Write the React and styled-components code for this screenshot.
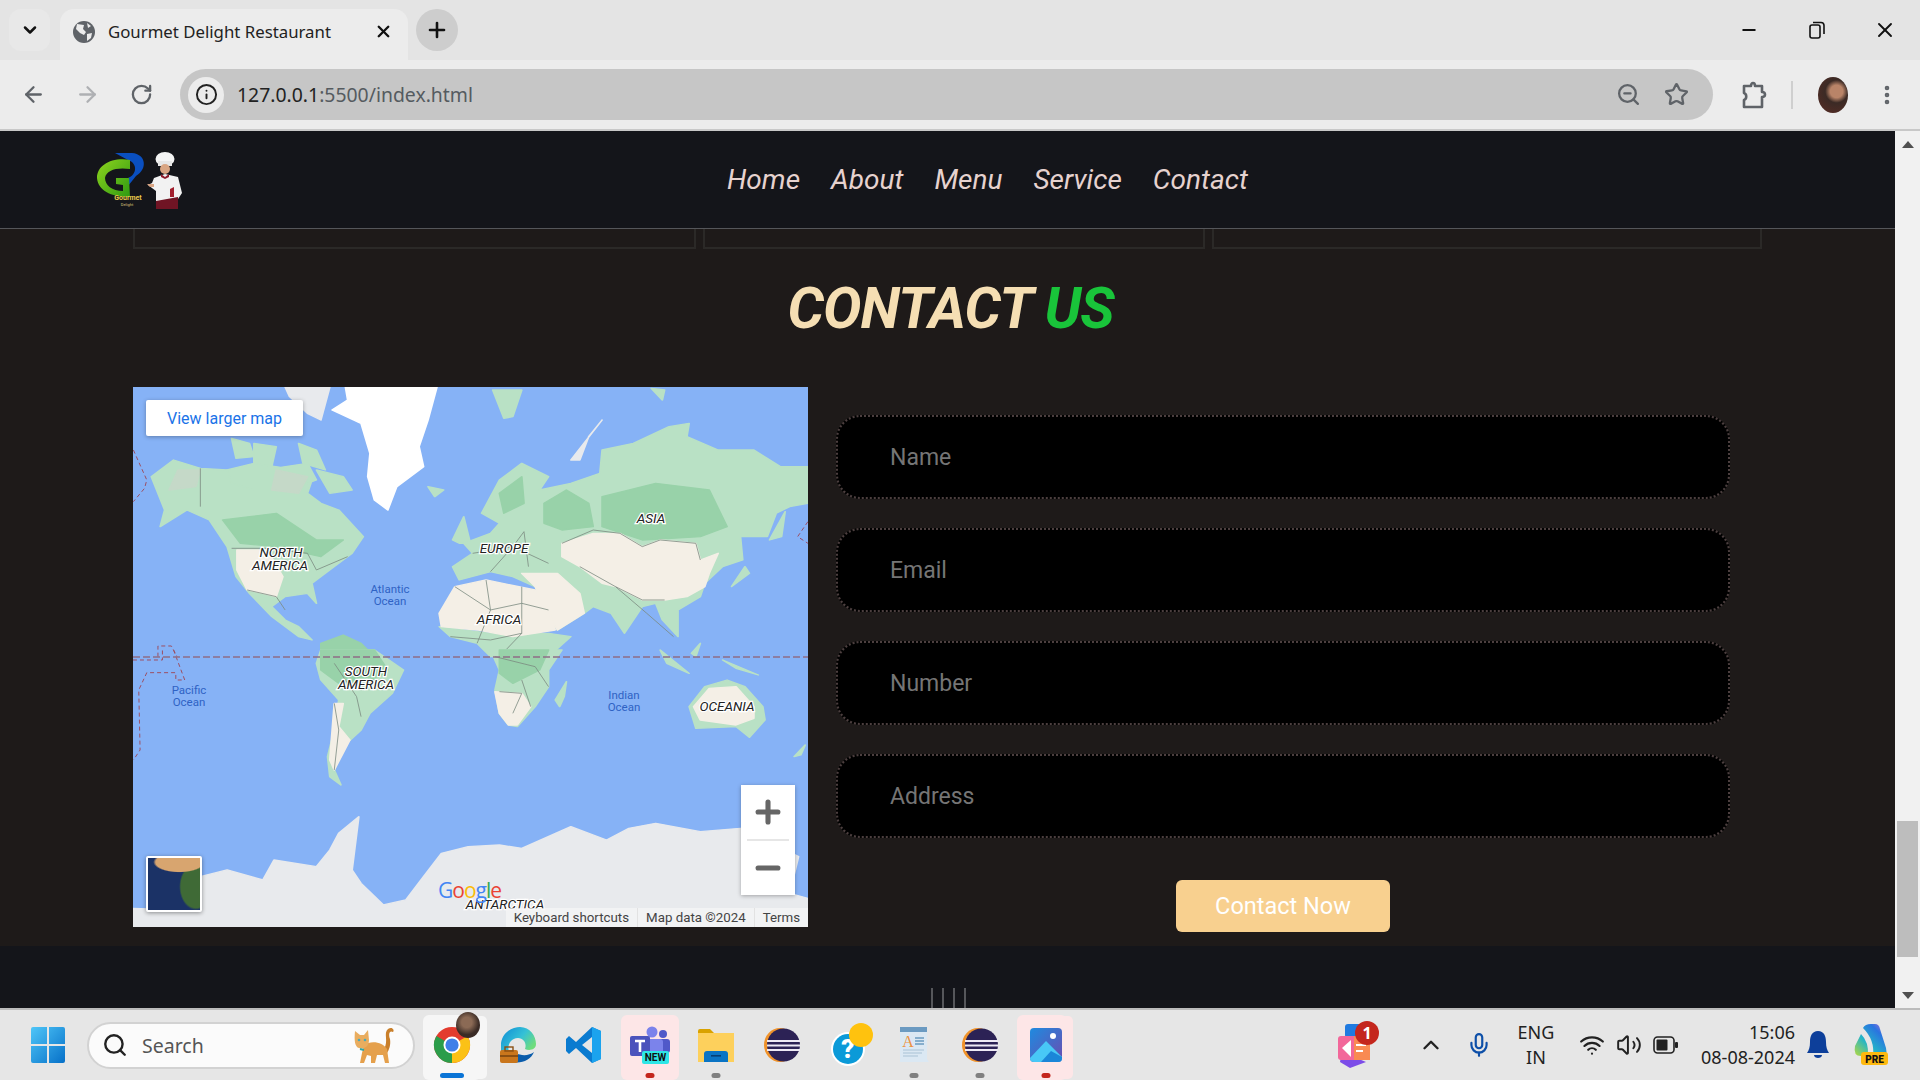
import React from 'react';
import styled, { createGlobalStyle } from 'styled-components';
import {
  ArrowLeft,
  ArrowRight,
  RotateCw,
  Info,
  ZoomOut,
  Star,
  MoreVertical,
  X,
  Plus,
  Minus,
  ChevronDown,
  ChevronUp,
  Search,
  Mic,
  Wifi,
  Volume2,
} from 'lucide-react';

const GlobalStyle = createGlobalStyle`
  html, body {
    margin: 0;
    padding: 0;
    overflow: hidden;
  }
  * {
    box-sizing: border-box;
  }
`;

const Screen = styled.div`
  width: 1920px;
  height: 1080px;
  display: flex;
  flex-direction: column;
  overflow: hidden;
  font-family: Roboto, sans-serif;
`;

/* browser chrome */
const TabStrip = styled.div`
  height: 60px;
  flex: none;
  display: flex;
  align-items: flex-end;
  background: #e4e4e4;
  padding-left: 9px;
`;

const TabListButton = styled.div`
  width: 41px;
  height: 42px;
  margin: 0 10px 9px 0;
  border-radius: 12px;
  background: #e8e8e8;
  display: flex;
  align-items: center;
  justify-content: center;
`;

const Tab = styled.div`
  width: 348px;
  height: 51px;
  background: #ececec;
  border-radius: 14px 14px 0 0;
  display: flex;
  align-items: center;
  padding: 0 15px 6px 13px;
  font-family: "Noto Sans", sans-serif;
  font-size: 16.8px;
  color: #222;
`;

const TabFavicon = styled.div`
  display: flex;
  margin-right: 13px;
`;

const TabTitle = styled.span`
  flex: 1;
  white-space: nowrap;
`;

const NewTab = styled.div`
  width: 42px;
  height: 42px;
  border-radius: 50%;
  background: #cdcdcd;
  margin: 0 0 9px 8px;
  display: flex;
  align-items: center;
  justify-content: center;
`;

const WindowControls = styled.div`
  margin-left: auto;
  height: 60px;
  display: flex;
  align-items: center;
  padding-right: 1px;
`;

const WindowButton = styled.div`
  width: 68px;
  display: flex;
  justify-content: center;
  align-items: center;
`;

const Toolbar = styled.div`
  height: 71px;
  flex: none;
  display: flex;
  align-items: center;
  background: #ececec;
  border-bottom: 2px solid #c8c8c8;
  padding: 0 0 0 6px;
`;

const NavIcon = styled.div`
  width: 54px;
  display: flex;
  justify-content: center;
  color: ${(p) => p.$color || '#5f6368'};
`;

const UrlBar = styled.div`
  width: 1533px;
  height: 51px;
  margin-left: 12px;
  border-radius: 26px;
  background: #c6c6c6;
  display: flex;
  align-items: center;
  padding: 0 24px 0 8px;
  font-family: "Noto Sans", sans-serif;
  font-size: 19.4px;
  color: #555b60;
`;

const InfoChip = styled.div`
  width: 36px;
  height: 36px;
  border-radius: 50%;
  background: #ececec;
  color: #222;
  display: flex;
  align-items: center;
  justify-content: center;
  margin-right: 13px;
`;

const UrlHost = styled.span`
  color: #222;
`;

const UrlActions = styled.div`
  margin-left: auto;
  display: flex;
  gap: 23px;
  color: #5f6368;
`;

const ToolbarRight = styled.div`
  display: flex;
  align-items: center;
  margin-left: 28px;
  color: #5f6368;
`;

const ToolDivider = styled.div`
  width: 2px;
  height: 28px;
  background: #cfcfcf;
  margin: 0 25px 0 24px;
`;

const Avatar = styled.div`
  width: 30px;
  height: 36px;
  border-radius: 50%;
  background: radial-gradient(circle at 62% 40%, #b98468 0 22%, #3b2a25 40%, #5a2c24 100%);
`;

const MoreSlot = styled.div`
  display: flex;
  margin-left: 27px;
`;

/* page */
const Viewport = styled.div`
  flex: 1;
  min-height: 0;
  display: flex;
`;

const Page = styled.div`
  flex: 1;
  min-width: 0;
  display: flex;
  flex-direction: column;
`;

const Scrollbar = styled.div`
  width: 25px;
  flex: none;
  background: #f1f1f1;
  display: flex;
  flex-direction: column;
  align-items: center;
  justify-content: space-between;
  padding: 10px 0 9px;
`;

const ScrollArrow = styled.div`
  width: 0;
  height: 0;
  border-left: 6px solid transparent;
  border-right: 6px solid transparent;
  ${(p) => (p.$down ? 'border-top: 7px solid #505050;' : 'border-bottom: 7px solid #505050;')}
`;

const ScrollTrack = styled.div`
  flex: 1;
  width: 100%;
  display: flex;
  flex-direction: column;
  justify-content: flex-end;
  padding: 0 2px 35px;
`;

const ScrollThumb = styled.div`
  height: 136px;
  background: #bdbdbd;
`;

const Navbar = styled.nav`
  height: 98px;
  flex: none;
  display: flex;
  align-items: center;
  background: #14151a;
  border-bottom: 1px solid #55565a;
  padding-left: 90px;
`;

const NavLinks = styled.div`
  display: flex;
  gap: 31px;
  margin-left: 527px;
`;

const NavLink = styled.a`
  font-size: 28px;
  font-style: italic;
  font-weight: 400;
  color: #e6d2cf;
  text-decoration: none;
`;

const ContactSection = styled.section`
  height: 717px;
  flex: none;
  background: #1e1a19;
  padding: 0 133px;
`;

const CardRemnants = styled.div`
  display: flex;
  gap: 7px;
  width: 1630px;
`;

const CardRemnant = styled.div`
  width: ${(p) => p.$w}px;
  height: 20px;
  border: 2px solid #2b2927;
  border-top: none;
`;

const Heading = styled.h2`
  margin: 27px 0 0;
  height: 111px;
  padding-left: 6px;
  text-align: center;
  font-size: 57.5px;
  line-height: 66px;
  font-weight: 700;
  font-style: italic;
  letter-spacing: -1px;
  color: #f5deb3;
`;

const HeadingAccent = styled.span`
  color: #19c43a;
`;

const ContactRow = styled.div`
  display: flex;
  gap: 28px;
`;

const MapFrame = styled.div`
  position: relative;
  width: 675px;
  height: 540px;
  flex: none;
  background: #86b2f6;
  overflow: hidden;
`;

const MapCanvas = styled.svg`
  display: block;
`;

const LargerMap = styled.div`
  position: absolute;
  left: 13px;
  top: 13px;
  width: 157px;
  height: 36px;
  background: #fff;
  border-radius: 2px;
  box-shadow: 0 1px 4px rgba(0, 0, 0, 0.3);
  display: flex;
  align-items: center;
  justify-content: center;
  color: #1a73e8;
  font-size: 16px;
`;

const ZoomBox = styled.div`
  position: absolute;
  right: 13px;
  bottom: 32px;
  width: 54px;
  height: 110px;
  background: #fff;
  box-shadow: 0 1px 4px rgba(0, 0, 0, 0.3);
  display: flex;
  flex-direction: column;
  align-items: center;
  justify-content: space-between;
  padding: 10px 0;
  color: #666;
`;

const ZoomRule = styled.div`
  width: 42px;
  height: 2px;
  background: #e6e6e6;
`;

const SatelliteThumb = styled.div`
  position: absolute;
  left: 13px;
  bottom: 15px;
  width: 56px;
  height: 56px;
  border: 2px solid #fff;
  border-radius: 2px;
  box-shadow: 0 1px 4px rgba(0, 0, 0, 0.4);
  background:
    radial-gradient(ellipse 50% 20% at 60% 8%, #d8a56f 90%, transparent),
    radial-gradient(ellipse 32% 45% at 92% 55%, #3f6a36 90%, transparent),
    #1b3266;
`;

const GoogleMark = styled.div`
  position: absolute;
  left: 305px;
  top: 491px;
  font-family: "Open Sans", sans-serif;
  font-size: 21px;
  letter-spacing: -1px;
  line-height: 24px;
`;

const GoogleLetter = styled.span`
  color: ${(p) => p.$c};
`;

const Attribution = styled.div`
  position: absolute;
  right: 0;
  bottom: 0;
  height: 19px;
  display: flex;
  background: rgba(245, 245, 245, 0.75);
  font-size: 13.3px;
  line-height: 19px;
  color: #444;
`;

const AttributionItem = styled.span`
  padding: 0 8px;
  white-space: nowrap;
  & + & {
    border-left: 1px solid #e2e2e2;
  }
`;

const ContactForm = styled.form`
  width: 894px;
  padding-top: 28px;
  display: flex;
  flex-direction: column;
  gap: 29px;
`;

const Field = styled.input`
  width: 100%;
  height: 84px;
  background: #000;
  border: 2px dotted #4c3f3f;
  border-radius: 24px;
  padding: 0 0 0 52px;
  color: #fff;
  font-family: Roboto, sans-serif;
  font-size: 23px;
  outline: none;

  &::placeholder {
    color: #757575;
    opacity: 1;
  }
`;

const SubmitButton = styled.button`
  align-self: center;
  width: 214px;
  height: 52px;
  margin-top: 13px;
  background: #f8d08f;
  border: none;
  border-radius: 6px;
  color: #fff;
  font-family: Roboto, sans-serif;
  font-size: 23.5px;
  font-weight: 400;
`;

const Footer = styled.footer`
  flex: 1;
  background: #14151a;
  display: flex;
  align-items: flex-end;
  justify-content: center;
  gap: 9px;
  padding-left: 2px;
`;

const FooterTick = styled.div`
  width: 2px;
  height: 20px;
  background: #56575b;
`;

/* windows taskbar */
const Taskbar = styled.div`
  height: 72px;
  flex: none;
  display: flex;
  align-items: center;
  background: #e6e6e6;
  border-top: 2px solid #bcbcbc;
  padding-left: 31px;
  font-family: "Noto Sans", sans-serif;
  color: #222;
`;

const SearchBox = styled.div`
  width: 328px;
  height: 47px;
  margin: 0 4px 0 22px;
  border-radius: 24px;
  background: #fbfbfb;
  border: 2px solid #d2d2d2;
  display: flex;
  align-items: center;
  padding: 0 18px 0 13px;
  font-size: 19.5px;
  color: #555;
  gap: 14px;
`;

const SearchArt = styled.div`
  margin-left: auto;
  display: flex;
`;

const AppSlot = styled.div`
  position: relative;
  width: 66px;
  height: 70px;
  display: flex;
  align-items: center;
  justify-content: center;
`;

const AppTile = styled.div`
  position: absolute;
  top: 5px;
  bottom: 0;
  left: ${(p) => p.$l || 4}px;
  right: ${(p) => p.$r || 4}px;
  border-radius: 6px;
  background: ${(p) => p.$bg};
  box-shadow: ${(p) => (p.$stack ? `7px 0 0 -1px ${p.$bg}` : 'none')};
`;

const AppGlyph = styled.div`
  position: relative;
  display: flex;
`;

const AppBadge = styled.div`
  position: absolute;
  top: -14px;
  right: -9px;
  width: 24px;
  height: 26px;
  border-radius: 50%;
  background: radial-gradient(circle at 45% 40%, #8b6a55 0 25%, #3a2b25 60%);
`;

const AppDot = styled.div`
  position: absolute;
  bottom: 2px;
  left: 50%;
  transform: translateX(-50%);
  width: ${(p) => p.$w || 9}px;
  height: 5px;
  border-radius: 3px;
  background: ${(p) => p.$c};
`;

const Tray = styled.div`
  margin-left: auto;
  display: flex;
  align-items: center;
  padding-right: 19px;
`;

const TraySlot = styled.div`
  width: ${(p) => p.$w}px;
  margin-left: ${(p) => p.$ml || 0}px;
  display: flex;
  justify-content: center;
  color: ${(p) => p.$color || '#222'};
`;

const LangStack = styled.div`
  font-size: 18px;
  line-height: 25px;
  text-align: center;
`;

const ClockStack = styled.div`
  width: 100%;
  font-size: 18px;
  line-height: 25px;
  text-align: right;
`;

/* map data, traced on two crops of the map, so each has its own transform */
const land = '#b9e1c5';
const forest = '#98d2a9';
const sand = '#f4efe6';
const ice = '#e8eaed';

const northShapes = [
  [ice, '370,21 470,21 450,120 420,100 380,50'],
  ['#fff', '505,21 710,21 690,120 670,200 680,260 620,320 600,390 570,360 555,290 560,220 540,130 475,90 510,60'],
  [land, '70,290 120,240 180,265 240,270 270,300 340,270 400,280 430,300 420,340 450,370 490,390 545,470 520,520 480,560 430,610 440,670 420,640 370,650 340,680 370,720 400,740 430,780 400,770 340,710 290,640 260,590 240,500 200,420 150,390 90,440 100,390'],
  [land, '250,175 290,190 300,230 260,235'],
  [land, '300,190 350,200 340,260 300,250'],
  [land, '400,190 440,210 460,270 410,250'],
  [land, '440,270 500,290 520,330 470,340'],
  [land, '240,270 300,250 360,262 420,250 440,300 380,330 300,330 250,310'],
  ['#c5d9c8', '350,270 420,290 400,340 340,330'],
  ['#c5d9c8', '130,270 180,270 170,320 110,330'],
  [forest, '230,420 350,400 440,480 500,480 450,530 350,500 270,490'],
  [sand, '262,510 330,510 365,590 350,650 320,640 285,630 262,570'],
  [land, '690,320 725,330 705,350'],
  [land, '745,480 770,410 785,490 760,490'],
  [ice, '1010,240 1080,120 1050,170 1030,240'],
  [land, '835,30 900,30 880,110 860,115'],
  [land, '1190,25 1220,30 1215,60'],
  [land, '810,400 850,300 900,250 960,290 940,330 1010,310 1075,280 1080,210 1150,190 1230,140 1275,130 1270,170 1340,210 1420,210 1480,260 1541,260 1541,370 1500,380 1470,400 1450,470 1390,470 1395,540 1350,560 1310,610 1300,650 1250,690 1250,770 1215,720 1200,670 1170,680 1130,760 1100,700 1060,680 1040,700 980,750 940,650 930,620 880,590 830,575 760,600 745,560 790,520 770,490 830,460 850,430'],
  [forest, '950,370 1000,330 1050,370 1060,440 990,450 950,430'],
  [forest, '1080,350 1200,310 1320,330 1360,440 1300,470 1170,480 1080,440'],
  [forest, '850,340 900,290 905,370 860,400'],
  [sand, '990,490 1060,460 1120,460 1170,500 1210,480 1290,490 1300,540 1340,520 1320,580 1310,620 1270,650 1220,660 1170,660 1110,620 1080,610 1030,560 990,530'],
  [sand, '900,580 980,580 1030,640 1040,700 980,750 950,680 930,620'],
  [land, '1455,480 1490,395 1482,470'],
  [land, '1400,560 1370,620 1410,580'],
  [land, '1280,820 1300,790 1290,830'],
  [land, '715,740 830,760 960,760 1010,770 960,830 830,830 800,790 740,770'],
  [sand, '715,700 750,620 820,600 930,630 960,690 975,750 880,770 800,750 720,740'],
  [forest, '450,830 450,790 500,765 540,790 570,830'],
];

const southShapes = [
  [land, '440,40 450,0 570,0 635,60 610,130 560,190 540,240 500,290 480,360 495,405 470,380 465,320 480,240 490,150 450,90'],
  [forest, '450,0 570,0 600,60 540,120 490,100 450,60'],
  [sand, '480,160 500,160 490,230 515,270 480,360 470,330'],
  [land, '830,0 990,0 960,60 960,110 930,170 890,230 870,225 850,190 840,120 850,60'],
  [forest, '850,0 960,0 940,60 880,100 850,70'],
  [sand, '840,125 900,130 920,170 890,225 870,225 850,190'],
  [land, '975,150 1000,95 995,140 985,170'],
  [land, '1210,0 1275,70 1225,40'],
  [land, '1350,30 1430,75 1380,55'],
  [land, '1510,320 1535,285 1525,315'],
  [land, '1275,170 1310,110 1360,90 1400,110 1440,170 1445,210 1410,262 1380,230 1290,235'],
  [sand, '1285,170 1320,115 1380,110 1420,170 1420,205 1380,225 1300,210'],
  [ice, '29,775 130,780 180,680 240,660 320,690 345,630 440,650 470,600 490,550 535,500 520,660 540,700 590,765 640,750 680,680 720,610 780,590 850,585 900,595 1010,530 1090,570 1140,535 1200,520 1300,545 1390,535 1520,620 1500,730 1541,745 1541,830 29,830'],
];

const northBorders = [
  '250,505 330,505 420,520 440,570 510,530',
  '285,630 350,650 370,690',
  '180,265 180,380',
  '830,575 880,500 905,455 915,560',
  '790,520 880,500 960,550',
  '990,490 1060,450 1120,460 1170,500 1210,480 1290,490 1300,540',
  '1030,560 1110,620 1170,660 1220,660',
  '1110,620 1180,700 1240,770',
  '750,620 830,690 900,670 960,690',
  '820,600 830,690 800,790',
  '900,620 900,760 850,830',
  '740,770 830,780 900,760',
];

const southBorders = [
  '480,40 530,140 540,200',
  '480,160 490,240 480,360',
  '840,20 930,50 960,110',
  '850,125 900,130 880,190',
  '900,90 920,170',
];

const dashedNorth = [
  '30,210 60,300 55,325 30,365',
  '1541,425 1518,470 1541,490',
  '85,830 85,798 115,798 128,830',
];

const dashedSouth = [
  '29,30 95,30 95,0',
  '120,0 145,90 125,90 125,68 60,68 42,120 45,300 30,330',
];

const continentLabels = [
  ['NORTH', 148, 170],
  ['AMERICA', 147, 183],
  ['EUROPE', 371, 166],
  ['ASIA', 518, 136],
  ['AFRICA', 366, 237],
  ['SOUTH', 233, 289],
  ['AMERICA', 233, 302],
  ['OCEANIA', 594, 324],
  ['ANTARCTICA', 372, 522],
];

const oceanLabels = [
  ['Atlantic', 257, 206],
  ['Ocean', 257, 218],
  ['Pacific', 56, 307],
  ['Ocean', 56, 319],
  ['Indian', 491, 312],
  ['Ocean', 491, 324],
];

function WorldMap() {
  const drawShapes = (shapes) =>
    shapes.map(([fill, points], i) => (
      <polygon key={i} fill={fill} stroke={fill} strokeWidth="4" strokeLinejoin="round" points={points} />
    ));
  const drawLines = (lines, stroke, width, dash) =>
    lines.map((points, i) => (
      <polyline
        key={i}
        points={points}
        fill="none"
        stroke={stroke}
        strokeWidth={width}
        strokeDasharray={dash}
        vectorEffect="non-scaling-stroke"
      />
    ));

  return (
    <MapCanvas width="675" height="540" viewBox="0 0 675 540">
      <g transform="translate(-13 -7) scale(0.4464 0.3333)">
        {drawShapes(northShapes)}
        {drawLines(northBorders, '#7b8a80', 0.8)}
        {drawLines(dashedNorth, '#9c4f63', 1, '4 3')}
      </g>
      <g transform="translate(-13 263) scale(0.4464 0.3333)">
        {drawShapes(southShapes)}
        {drawLines(southBorders, '#7b8a80', 0.8)}
        {drawLines(dashedSouth, '#9c4f63', 1, '4 3')}
      </g>
      <line x1="0" y1="270" x2="675" y2="270" stroke="#8f6d86" strokeWidth="1.6" strokeDasharray="7 3" />
      <g fontFamily="Roboto, sans-serif" textAnchor="middle">
        {continentLabels.map(([label, x, y], i) => (
          <text
            key={i}
            x={x}
            y={y}
            fontSize="13.5"
            fontStyle="italic"
            fill="#222"
            stroke="#fff"
            strokeWidth="2.5"
            paintOrder="stroke"
          >
            {label}
          </text>
        ))}
        {oceanLabels.map(([label, x, y], i) => (
          <text key={i} x={x} y={y} fontSize="11.5" fill="#2f62c4">
            {label}
          </text>
        ))}
      </g>
    </MapCanvas>
  );
}

/* drawn icons */
const BrandLogo = () => (
  <svg width="110" height="70" viewBox="0 0 110 70">
    <defs>
      <linearGradient id="leaf" x1="0" y1="0" x2="1" y2="1">
        <stop offset="0" stopColor="#8fd41e" />
        <stop offset="1" stopColor="#2f9a12" />
      </linearGradient>
    </defs>
    <path d="M25 8 L42 8 C56 9 58 24 46 31 L38 41 L38 33 C47 30 48 18 38 15 Z" fill="#0a4fc0" />
    <path
      d="M40 15 C22 12 7 20 7 33 C8 45 20 52 40 52 L39 33 L26 33 L26 39 L33 40 L33 46 C22 46 15 40 15 33 C16 25 27 22 40 24 Z"
      fill="url(#leaf)"
    />
    <text x="38" y="55" fontFamily="Roboto, sans-serif" fontSize="7" fontWeight="700" fill="#e8c84a" textAnchor="middle">
      Gourmet
    </text>
    <text x="37" y="61" fontFamily="Roboto, sans-serif" fontSize="4" fill="#d8c27a" textAnchor="middle">
      Delight
    </text>
    <ellipse cx="75" cy="14" rx="9.5" ry="7" fill="#f4f4f4" />
    <rect x="68" y="16" width="14" height="5" fill="#e6e6e6" />
    <circle cx="75" cy="24" r="5" fill="#d9a583" />
    <path d="M64 33 L75 29 L88 32 L92 48 L88 54 L88 64 L66 64 L66 46 L58 40 L62 38 Z" fill="#f2f2f2" />
    <path d="M71 29 L75 32 L79 29 L79 32 L75 34 L71 32 Z" fill="#8d1b2b" />
    <path d="M66 56 L88 52 L88 64 L66 64 Z" fill="#701424" />
    <path d="M80 44 L84 42 L84 52 L80 52 Z" fill="#a21f2e" />
    <path d="M57 39 L64 39 L64 42 L60 42 Z" fill="#d9a583" />
  </svg>
);

const FaviconGlobe = () => (
  <svg width="22" height="22" viewBox="0 0 22 22">
    <circle cx="11" cy="11" r="11" fill="#5f6368" />
    <path d="M4 3 L11 4 L10 8 L13 11 L11 14 L7 12 L3 8 Z M14 13 L19 12 L18 17 L14 20 Z M14 2 L18 5 L15 7 Z" fill="#ececec" />
  </svg>
);

const PuzzleGlyph = () => (
  <svg width="26" height="30" viewBox="0 0 26 30" fill="none" stroke="#5f6368" strokeWidth="2.6" strokeLinejoin="round">
    <path d="M3 6 H10 C10 2 14 2 14 6 H21 V12 C25 12 25 17 21 17 V27 H3 V20 C6 19 6 14 3 13 Z" />
  </svg>
);

const RestoreGlyph = () => (
  <svg width="16" height="18" viewBox="0 0 16 18" fill="none" stroke="#111" strokeWidth="1.6">
    <rect x="1" y="4" width="10" height="13" rx="2" />
    <path d="M4 1.5 H12 C14 1.5 15 3 15 4.5 V13" />
  </svg>
);

const WindowsLogo = () => (
  <svg width="34" height="36" viewBox="0 0 34 36">
    <defs>
      <linearGradient id="win" x1="0" y1="0" x2="1" y2="1">
        <stop offset="0" stopColor="#4fc6f8" />
        <stop offset="1" stopColor="#0670c8" />
      </linearGradient>
    </defs>
    <path d="M0 2 Q0 0 2 0 H16 V17 H0 Z M18 0 H32 Q34 0 34 2 V17 H18 Z M0 19 H16 V36 H2 Q0 36 0 34 Z M18 19 H34 V34 Q34 36 32 36 H18 Z" fill="url(#win)" />
  </svg>
);

const CatArt = () => (
  <svg width="42" height="40" viewBox="0 0 42 40">
    <path d="M31 24 C36 16 30 8 35 4 C39 1 42 5 40 7 C37 5 35 8 37 14 C38 20 36 25 34 28 Z" fill="#c97f2a" />
    <path d="M11 20 C18 15 30 17 34 24 L36 38 H32 L30 30 L24 30 L22 38 H18 L18 31 L14 30 L11 38 H7 L9 28 Z" fill="#e5a04c" />
    <path d="M2 6 L7 10 H11 L15 5 L16 15 C16 22 10 25 6 23 C2 22 1 16 2 6 Z" fill="#e9ad5f" />
    <circle cx="6" cy="15" r="1.3" fill="#4aa8b5" />
    <circle cx="12" cy="15" r="1.3" fill="#4aa8b5" />
    <path d="M7 24 L11 25" stroke="#2fa6a6" strokeWidth="2" />
  </svg>
);

const ChromeLogo = () => (
  <svg width="38" height="38" viewBox="0 0 38 38">
    <circle cx="19" cy="19" r="18" fill="#e33b2e" />
    <path d="M19 19 L3.4 10 A18 18 0 0 0 19 37 Z" fill="#2b9d4a" />
    <path d="M19 19 L19 37 A18 18 0 0 0 34.6 10 Z" fill="#fbc116" />
    <circle cx="19" cy="19" r="8.5" fill="#fff" />
    <circle cx="19" cy="19" r="6.6" fill="#3f7fe8" />
  </svg>
);

const EdgeLogo = () => (
  <svg width="38" height="38" viewBox="0 0 38 38">
    <defs>
      <linearGradient id="edge" x1="0" y1="0" x2="1" y2="0.6">
        <stop offset="0" stopColor="#0d8ad6" />
        <stop offset="0.6" stopColor="#35c1d6" />
        <stop offset="1" stopColor="#6fdc7c" />
      </linearGradient>
    </defs>
    <path d="M2 17 C4 5 14 1 21 1 C31 1 37 10 37 18 C37 24 30 25 26 23 C28 18 25 12 19 12 C11 12 8 20 10 26 H2 Z" fill="url(#edge)" />
    <path d="M14 36 C22 38 32 34 35 26 C30 30 22 30 17 27 L15 30 Z" fill="#0a5cab" />
    <rect x="1" y="24" width="18" height="13" rx="2" fill="#c9761c" />
    <rect x="6" y="21" width="8" height="4" fill="none" stroke="#8a4f12" strokeWidth="1.4" />
    <rect x="1" y="29" width="18" height="2" fill="#8a4f12" />
  </svg>
);

const VsCodeLogo = () => (
  <svg width="38" height="38" viewBox="0 0 38 38">
    <path fillRule="evenodd" d="M27 1 L36 5 V33 L27 37 L11 22 L4 28 L1 25 V13 L4 10 L11 16 Z M27 11 L17 19 L27 27 Z" fill="#0a7bd0" />
    <path d="M27 1 L36 5 V33 L27 37 Z" fill="#1ba3ee" />
  </svg>
);

const TeamsLogo = () => (
  <svg width="44" height="40" viewBox="0 0 44 40">
    <circle cx="24" cy="7" r="5.5" fill="#7b83eb" />
    <circle cx="35" cy="9" r="4" fill="#5059c9" />
    <rect x="29" y="14" width="13" height="14" rx="3" fill="#5059c9" />
    <rect x="15" y="14" width="20" height="17" rx="3" fill="#7b83eb" />
    <rect x="2" y="11" width="20" height="20" rx="2" fill="#4b53bc" />
    <path d="M7 16 H17 M12 16 V27" stroke="#fff" strokeWidth="2.6" />
    <rect x="14" y="26" width="27" height="13" rx="2" fill="#2ee6e6" />
    <text x="27.5" y="36" fontFamily="Roboto, sans-serif" fontSize="10" fontWeight="700" fill="#111" textAnchor="middle">
      NEW
    </text>
  </svg>
);

const FolderLogo = () => (
  <svg width="36" height="34" viewBox="0 0 36 34">
    <path d="M0 3 Q0 1 2 1 H12 L16 5 H36 V10 H0 Z" fill="#d9a200" />
    <path d="M0 5 H36 V34 H0 Z" fill="#fdd05c" />
    <path d="M6 34 V26 Q6 23 9 23 H27 Q30 23 30 26 V34 Z" fill="#0a74c4" />
    <rect x="13" y="27" width="10" height="1.6" fill="#063f75" />
  </svg>
);

const EclipseLogo = () => (
  <svg width="38" height="34" viewBox="0 0 38 34">
    <ellipse cx="17" cy="17" rx="16" ry="17" fill="#f0932b" />
    <ellipse cx="20.5" cy="17" rx="16.5" ry="16.5" fill="#2c2255" />
    <path d="M4 12 H37 V14 H4 Z M4 16.5 H37 V18.5 H4 Z M4 21 H37 V23 H4 Z" fill="#eeeaf5" />
  </svg>
);

const HelpLogo = () => (
  <svg width="52" height="44" viewBox="-9 0 52 44">
    <circle cx="17" cy="26" r="17" fill="#fff" />
    <circle cx="17" cy="26" r="15" fill="#0b9ad8" />
    <text x="17" y="35" fontFamily="Roboto, sans-serif" fontSize="26" fontWeight="900" fill="#fff" textAnchor="middle">
      ?
    </text>
    <ellipse cx="30" cy="12" rx="12" ry="12" fill="#ffc20e" />
  </svg>
);

const NotepadLogo = () => (
  <svg width="32" height="36" viewBox="0 0 32 36">
    <path d="M2 0 H29 V32 L31 35 H2 Z" fill="#dbe8f3" />
    <rect x="2" y="0" width="27" height="5" fill="#6b9ac1" />
    <text x="10" y="20" fontFamily="Liberation Serif, serif" fontSize="16" fill="#ec9242" textAnchor="middle">
      A
    </text>
    <path d="M17 11 H26 M17 14 H26 M17 17 H26" stroke="#6b9ac1" strokeWidth="1.6" />
    <path d="M5 23 H26 M5 26 H24 M5 29 H20" stroke="#a9c2d6" strokeWidth="1.2" />
  </svg>
);

const PhotosLogo = () => (
  <svg width="32" height="34" viewBox="0 0 32 34">
    <defs>
      <linearGradient id="photos" x1="0" y1="0" x2="1" y2="1">
        <stop offset="0" stopColor="#1e8be0" />
        <stop offset="1" stopColor="#6b4cb0" />
      </linearGradient>
    </defs>
    <rect width="32" height="34" rx="4" fill="url(#photos)" />
    <circle cx="23" cy="8" r="3" fill="#fff" />
    <path d="M0 30 L16 13 L32 29 V30 Q32 34 28 34 H4 Q0 34 0 30 Z" fill="#48c8f6" />
    <path d="M11 34 L21 23 L32 29 V30 Q32 34 28 34 Z" fill="#1b86d8" />
  </svg>
);

const NotifyLogo = () => (
  <svg width="44" height="50" viewBox="0 0 44 50">
    <path d="M6 32 L4 42 L14 48 L30 42 Z" fill="#7c4ce8" />
    <rect x="9" y="4" width="16" height="14" rx="3" fill="#1f7ae0" />
    <rect x="2" y="16" width="32" height="24" rx="3" fill="#f2679a" />
    <rect x="18" y="16" width="16" height="24" fill="#f98a52" />
    <path d="M6 28 L15 20 V37 Z" fill="#fff" />
    <path d="M20 25 H30 M20 31 H27" stroke="#fff" strokeWidth="2" />
    <circle cx="31" cy="13" r="12" fill="#c4261d" />
    <text x="31" y="19" fontFamily="Noto Sans, sans-serif" fontSize="16" fontWeight="700" fill="#fff" textAnchor="middle">
      1
    </text>
  </svg>
);

const BatteryGlyph = () => (
  <svg width="25" height="18" viewBox="0 0 25 18" fill="none">
    <rect x="1" y="1" width="20" height="16" rx="3.5" stroke="#222" strokeWidth="1.6" />
    <rect x="3.5" y="3.5" width="11" height="11" rx="1" fill="#222" />
    <rect x="22" y="6" width="3" height="6" rx="1" fill="#222" />
  </svg>
);

const BellGlyph = () => (
  <svg width="22" height="30" viewBox="0 0 22 30">
    <path d="M11 1 C5 1 3 6 3 12 C3 17 2 20 0 23 H22 C20 20 19 17 19 12 C19 6 17 1 11 1 Z" fill="#0d3f9a" />
    <path d="M7 25 H15 C15 29 7 29 7 25 Z" fill="#0d3f9a" />
  </svg>
);

const CopilotLogo = () => (
  <svg width="36" height="42" viewBox="0 0 36 42">
    <defs>
      <linearGradient id="copilot" x1="0" y1="1" x2="1" y2="0">
        <stop offset="0" stopColor="#b6d93c" />
        <stop offset="0.4" stopColor="#23b4c8" />
        <stop offset="0.75" stopColor="#2a74e0" />
        <stop offset="1" stopColor="#c06fd8" />
      </linearGradient>
    </defs>
    <path d="M10 4 Q12 0 18 0 H22 Q26 0 27 5 L33 24 Q35 32 28 32 H20 Q22 16 10 4 Z M8 10 Q16 18 15 32 H8 Q0 32 2 22 Z" fill="url(#copilot)" />
    <rect x="8" y="28" width="27" height="13" rx="3" fill="#fdb90f" />
    <text x="21.5" y="38.5" fontFamily="Roboto, sans-serif" fontSize="10" fontWeight="900" fill="#111" textAnchor="middle">
      PRE
    </text>
  </svg>
);

const navItems = ['Home', 'About', 'Menu', 'Service', 'Contact'];
const formFields = ['Name', 'Email', 'Number', 'Address'];
const googleLetters = [
  ['G', '#4285f4'],
  ['o', '#ea4335'],
  ['o', '#fbbc05'],
  ['g', '#4285f4'],
  ['l', '#34a853'],
  ['e', '#ea4335'],
];

function App() {
  return (
    <Screen>
      <GlobalStyle />

      <TabStrip>
        <TabListButton>
          <ChevronDown size={20} strokeWidth={3} color="#111" />
        </TabListButton>
        <Tab>
          <TabFavicon>
            <FaviconGlobe />
          </TabFavicon>
          <TabTitle>Gourmet Delight Restaurant</TabTitle>
          <X size={19} strokeWidth={3} color="#111" />
        </Tab>
        <NewTab>
          <Plus size={24} strokeWidth={2.6} color="#111" />
        </NewTab>
        <WindowControls>
          <WindowButton>
            <Minus size={20} strokeWidth={2.2} color="#111" />
          </WindowButton>
          <WindowButton>
            <RestoreGlyph />
          </WindowButton>
          <WindowButton>
            <X size={24} strokeWidth={1.9} color="#111" />
          </WindowButton>
        </WindowControls>
      </TabStrip>

      <Toolbar>
        <NavIcon>
          <ArrowLeft size={25} strokeWidth={2.2} />
        </NavIcon>
        <NavIcon $color="#aeb0b3">
          <ArrowRight size={25} strokeWidth={2.2} />
        </NavIcon>
        <NavIcon>
          <RotateCw size={23} strokeWidth={2.4} />
        </NavIcon>
        <UrlBar>
          <InfoChip>
            <Info size={23} strokeWidth={2} />
          </InfoChip>
          <UrlHost>127.0.0.1</UrlHost>:5500/index.html
          <UrlActions>
            <ZoomOut size={25} strokeWidth={2.2} />
            <Star size={25} strokeWidth={2.2} />
          </UrlActions>
        </UrlBar>
        <ToolbarRight>
          <PuzzleGlyph />
          <ToolDivider />
          <Avatar />
          <MoreSlot>
            <MoreVertical size={24} strokeWidth={2.6} />
          </MoreSlot>
        </ToolbarRight>
      </Toolbar>

      <Viewport>
        <Page>
          <Navbar>
            <BrandLogo />
            <NavLinks>
              {navItems.map((item) => (
                <NavLink key={item}>{item}</NavLink>
              ))}
            </NavLinks>
          </Navbar>

          <ContactSection>
            <CardRemnants>
              <CardRemnant $w={563} />
              <CardRemnant $w={502} />
              <CardRemnant $w={550} />
            </CardRemnants>
            <Heading>
              CONTACT <HeadingAccent>US</HeadingAccent>
            </Heading>
            <ContactRow>
              <MapFrame>
                <WorldMap />
                <LargerMap>View larger map</LargerMap>
                <ZoomBox>
                  <Plus size={34} strokeWidth={3.6} />
                  <ZoomRule />
                  <Minus size={34} strokeWidth={3.6} />
                </ZoomBox>
                <SatelliteThumb />
                <GoogleMark>
                  {googleLetters.map(([letter, color], i) => (
                    <GoogleLetter key={i} $c={color}>
                      {letter}
                    </GoogleLetter>
                  ))}
                </GoogleMark>
                <Attribution>
                  <AttributionItem>Keyboard shortcuts</AttributionItem>
                  <AttributionItem>Map data ©2024</AttributionItem>
                  <AttributionItem>Terms</AttributionItem>
                </Attribution>
              </MapFrame>
              <ContactForm>
                {formFields.map((field) => (
                  <Field key={field} placeholder={field} />
                ))}
                <SubmitButton type="button">Contact Now</SubmitButton>
              </ContactForm>
            </ContactRow>
          </ContactSection>

          <Footer>
            <FooterTick />
            <FooterTick />
            <FooterTick />
            <FooterTick />
          </Footer>
        </Page>

        <Scrollbar>
          <ScrollArrow />
          <ScrollTrack>
            <ScrollThumb />
          </ScrollTrack>
          <ScrollArrow $down />
        </Scrollbar>
      </Viewport>

      <Taskbar>
        <WindowsLogo />
        <SearchBox>
          <Search size={26} strokeWidth={2.2} color="#222" />
          Search
          <SearchArt>
            <CatArt />
          </SearchArt>
        </SearchBox>

        <AppSlot>
          <AppTile $bg="#f6f6f6" $stack />
          <AppGlyph>
            <ChromeLogo />
            <AppBadge />
          </AppGlyph>
          <AppDot $c="#0a74d6" $w={24} />
        </AppSlot>
        <AppSlot>
          <AppGlyph>
            <EdgeLogo />
          </AppGlyph>
        </AppSlot>
        <AppSlot>
          <AppGlyph>
            <VsCodeLogo />
          </AppGlyph>
        </AppSlot>
        <AppSlot>
          <AppTile $bg="#fde6e7" />
          <AppGlyph>
            <TeamsLogo />
          </AppGlyph>
          <AppDot $c="#c4261d" />
        </AppSlot>
        <AppSlot>
          <AppGlyph>
            <FolderLogo />
          </AppGlyph>
          <AppDot $c="#808080" />
        </AppSlot>
        <AppSlot>
          <AppGlyph>
            <EclipseLogo />
          </AppGlyph>
        </AppSlot>
        <AppSlot>
          <AppGlyph>
            <HelpLogo />
          </AppGlyph>
        </AppSlot>
        <AppSlot>
          <AppGlyph>
            <NotepadLogo />
          </AppGlyph>
          <AppDot $c="#808080" />
        </AppSlot>
        <AppSlot>
          <AppGlyph>
            <EclipseLogo />
          </AppGlyph>
          <AppDot $c="#808080" />
        </AppSlot>
        <AppSlot>
          <AppTile $bg="#fde6e7" $r={12} $stack />
          <AppGlyph>
            <PhotosLogo />
          </AppGlyph>
          <AppDot $c="#c4261d" />
        </AppSlot>

        <Tray>
          <TraySlot $w={66}>
            <NotifyLogo />
          </TraySlot>
          <TraySlot $w={40} $ml={20}>
            <ChevronUp size={26} strokeWidth={2.2} />
          </TraySlot>
          <TraySlot $w={56} $color="#0d4fa8">
            <Mic size={26} strokeWidth={2} />
          </TraySlot>
          <TraySlot $w={58}>
            <LangStack>
              ENG
              <br />
              IN
            </LangStack>
          </TraySlot>
          <TraySlot $w={40} $ml={7}>
            <Wifi size={26} strokeWidth={2} />
          </TraySlot>
          <TraySlot $w={34}>
            <Volume2 size={26} strokeWidth={1.8} />
          </TraySlot>
          <TraySlot $w={38}>
            <BatteryGlyph />
          </TraySlot>
          <TraySlot $w={111}>
            <ClockStack>
              15:06
              <br />
              08-08-2024
            </ClockStack>
          </TraySlot>
          <TraySlot $w={46}>
            <BellGlyph />
          </TraySlot>
          <TraySlot $w={60}>
            <CopilotLogo />
          </TraySlot>
        </Tray>
      </Taskbar>
    </Screen>
  );
}

export default App;
